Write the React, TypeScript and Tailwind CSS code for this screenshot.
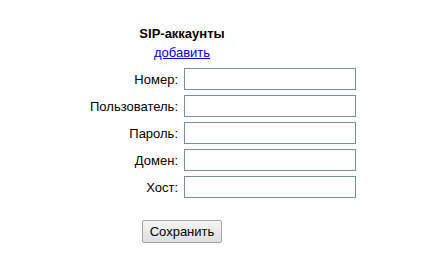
import React from 'react';

// Поля формы SIP-аккаунта
const fields: string[] = ['Номер:', 'Пользователь:', 'Пароль:', 'Домен:', 'Хост:'];

const App: React.FC = () => {
    return (
        <div className="min-h-screen bg-white pl-2 pt-[26px] font-['Liberation_Sans',Arial,sans-serif] text-[13px] leading-[15px] text-black">
            <div className="w-[348px] flex flex-col">
                <h2 className="text-center font-bold text-[13px] leading-[15px]">SIP-аккаунты</h2>
                <div className="mt-[4px] text-center">
                    <a href="#" className="text-[#0000ee] underline">добавить</a>
                </div>

                <form className="mt-[8px] flex flex-col gap-[5px]" onSubmit={(e) => e.preventDefault()}>
                    {fields.map((label) => (
                        <div key={label} className="flex items-center justify-end">
                            <label className="mr-[6px]">{label}</label>
                            <input
                                type="text"
                                className="w-[172px] h-[22px] border border-[#779291] bg-white px-1 outline-none"
                            />
                        </div>
                    ))}
                    <div className="mt-[17px] flex justify-center">
                        <button
                            type="submit"
                            className="w-[80px] h-[23px] border border-[#a6a6a6] rounded-[2px] bg-gradient-to-b from-[#f6f6f6] to-[#dedede] text-[13px] leading-[15px] text-black"
                        >
                            Сохранить
                        </button>
                    </div>
                </form>
            </div>
        </div>
    );
};

export default App;
